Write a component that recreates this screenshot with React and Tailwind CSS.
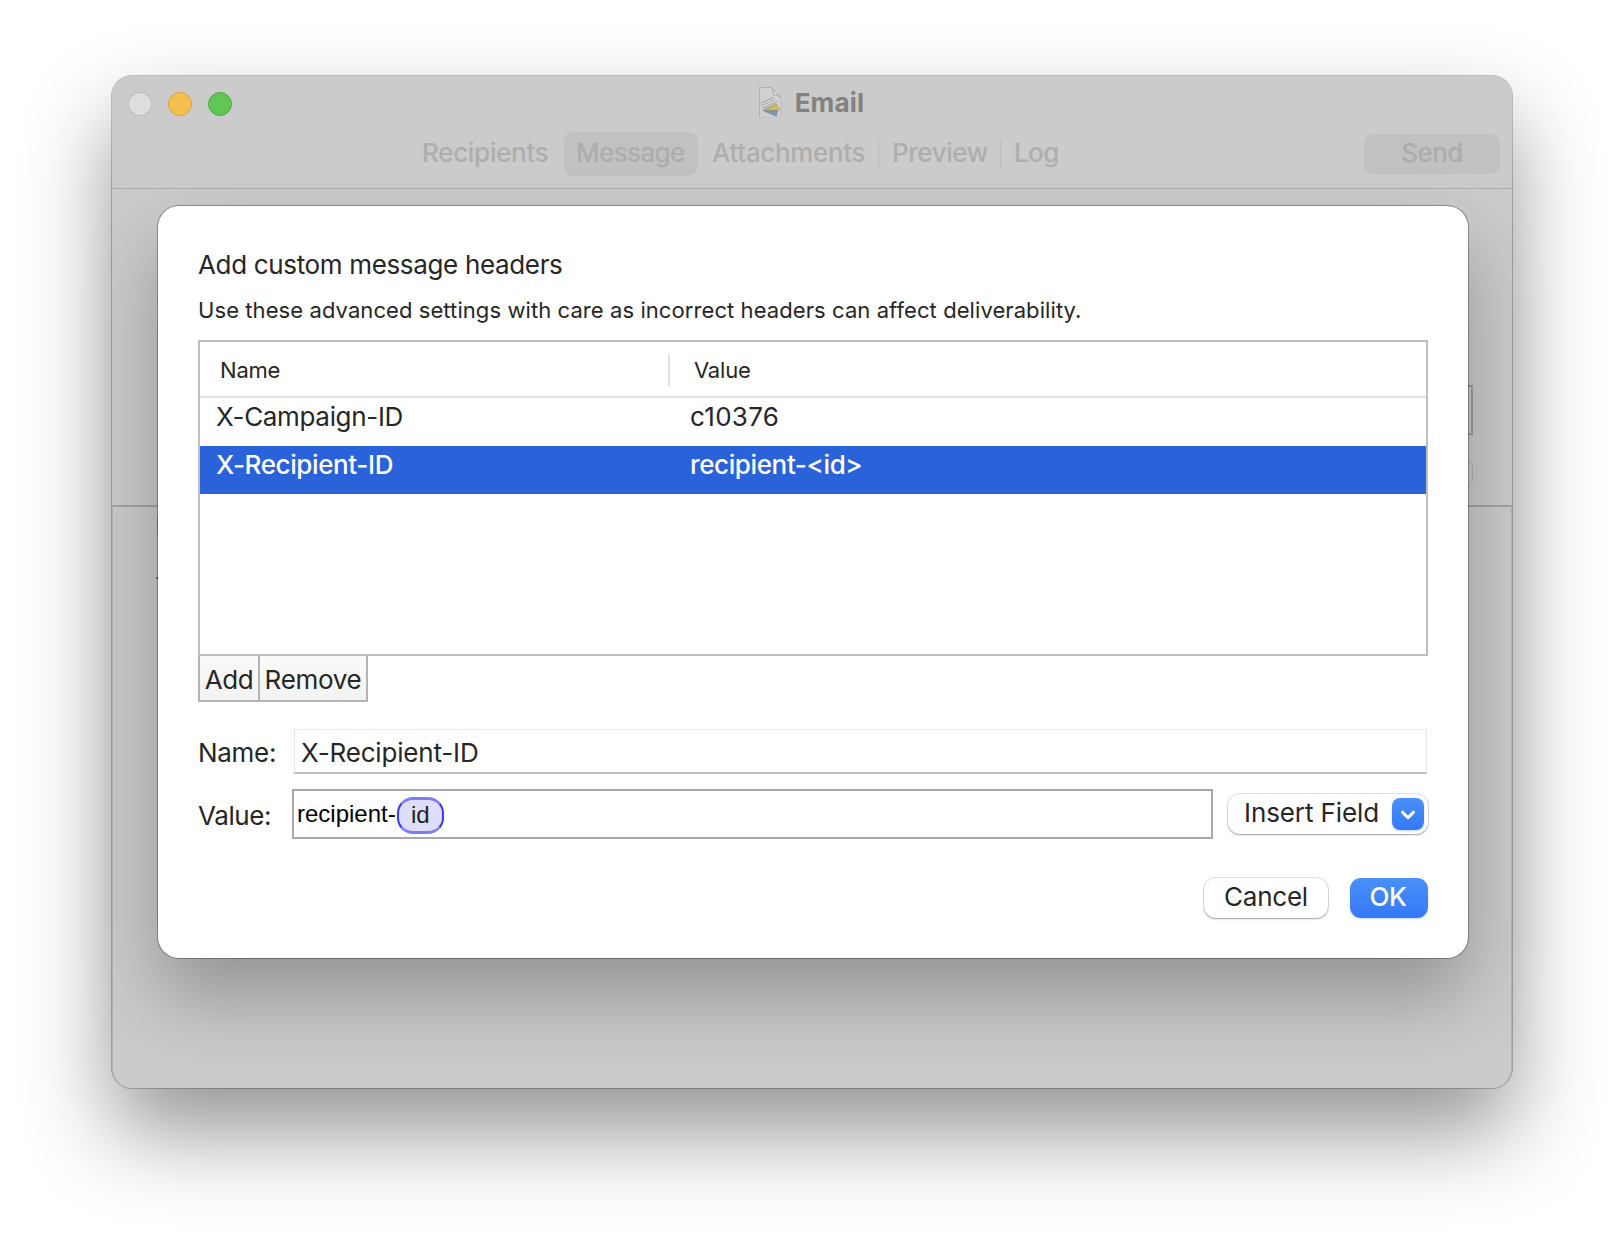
import React from "react";
import { ChevronDown } from "lucide-react";

const headers = [
  { name: "X-Campaign-ID", value: "c10376", nameClass: "tracking-[-0.33px]", valueClass: "tracking-[0.3px]" },
  { name: "X-Recipient-ID", value: "recipient-<id>", nameClass: "tracking-[-0.38px]", valueClass: "tracking-[-0.38px]", selected: true },
];

function DocumentIcon() {
  return (
    <svg className="w-[23px] h-[31px]" viewBox="0 0 23 31" fill="none">
      <path d="M0.5 0.5H12L22 11V30.5H0.5Z" fill="#d0d0d0" />
      <path d="M0.5 30.5V0.5H12" stroke="#b2b2b2" />
      <path d="M22 11V30.5" stroke="#bbbbbb" />
      <path d="M0.5 30.3H22" stroke="#c0c0c0" />
      <path d="M12 0.5L22 11C20 8.4 17 8 14.5 8.4C15 5 14.2 2 12 0.5Z" fill="#dcdcdc" stroke="#a5a5a5" strokeWidth="0.8" />
      <path d="M2 16L15 10.5M2 18.5L16 12.5M3 21L18 14.5M4 23L12 19.5" stroke="#a3a3a3" strokeWidth="1.1" />
      <path d="M2.5 17.3L15.5 11.8M3 19.8L17 13.6" stroke="#dedede" strokeWidth="0.9" />
      <path d="M4 23.5L18.5 23L17.5 29L12 27Z" fill="#8094ad" stroke="#74879f" strokeWidth="0.7" />
      <path d="M6 23L17 16.5L20.5 23Z" fill="#cfc56c" stroke="#a89f58" strokeWidth="0.8" />
      <path d="M10 21L13.5 20L16.5 18.5" stroke="#a39a54" strokeWidth="0.8" />
    </svg>
  );
}

function TitleBar() {
  return (
    <div className="grid grid-cols-3 items-center h-14">
      <div className="flex items-center gap-4 pl-4">
        <div className="size-6 rounded-full border border-[#bdbdbd] bg-[#dedede]"></div>
        <div className="size-6 rounded-full border border-[#dea03c] bg-[#f5bf4f]"></div>
        <div className="size-6 rounded-full border border-[#4fab43] bg-[#62c655]"></div>
      </div>
      <div className="flex items-center justify-center pb-[3px] pr-px">
        <DocumentIcon />
        <span className="ml-[13px] font-bold tracking-[0.2px] text-[#828282]">Email</span>
      </div>
    </div>
  );
}

function Toolbar() {
  return (
    <div className="flex items-center h-11 box-content pb-3 pl-[310px] pr-3 font-medium text-[#aeaeae] border-b border-[#adadad]">
      <span className="w-[142px] pb-[3px] tracking-[-0.3px]">Recipients</span>
      <span className="w-[134px] h-11 pt-px pl-3 rounded-[10px] leading-10 bg-[#c1c1c1] text-[#adadad] tracking-[-0.65px]">
        Message
      </span>
      <span className="w-[166px] ml-[14px] pb-[3px] tracking-[-0.35px]">Attachments</span>
      <span className="w-px h-7 bg-[#bcbcbc]"></span>
      <span className="w-[121px] pl-[13px] pb-[3px] tracking-[-0.45px]">Preview</span>
      <span className="w-px h-7 bg-[#bcbcbc]"></span>
      <span className="pl-[13px] pb-[3px] tracking-[-0.6px]">Log</span>
      <span className="flex items-center justify-center w-[136px] h-10 ml-auto pb-[3px] rounded-[10px] bg-[#c1c1c1] text-[#adadad] tracking-[-0.57px]">
        Send
      </span>
    </div>
  );
}

// Only the edges of these show around the sheet
function MessagePane() {
  return (
    <>
      <div className="flex flex-col items-end h-[316px] pt-[196px] pr-[39px]">
        <div className="w-[400px] h-[50px] border-2 border-[#9f9f9f]"></div>
        <div className="w-[200px] h-[29px] mt-[23px] rounded-[9px] border border-[#b3b3b3]"></div>
      </div>
      <div className="flex-1 rounded-b-[20px] border-x border-t-2 border-x-[#b4b4b4] border-t-[#a3a3a3]">
        <div className="w-[6px] h-[17px] mt-[10px] ml-[44px] bg-[#a0a0a0]"></div>
        <div className="w-[6px] h-[2px] mt-[43px] ml-[43px] bg-[#6a6a6a]"></div>
      </div>
    </>
  );
}

function HeaderTable() {
  return (
    <div className="h-[316px] mt-4 border-2 border-[#bebebe]">
      <div className="flex items-start h-14 border-b-2 border-[#e3e3e3] text-[22px] leading-[52px]">
        <div className="w-[468px] pt-[2px] pl-5 tracking-[-0.2px]">Name</div>
        <div className="w-[2px] h-8 mt-3 bg-[#e3e3e3]"></div>
        <div className="pt-[2px] pl-6 tracking-[-0.19px]">Value</div>
      </div>
      {headers.map((h) => (
        <div
          key={h.name}
          className={`flex items-center h-12 pb-[11px] pl-4 ${h.selected ? "bg-[#2962d9] text-white font-medium" : ""}`}
        >
          <span className={`w-[474px] ${h.nameClass}`}>{h.name}</span>
          <span className={h.valueClass}>{h.value}</span>
        </div>
      ))}
    </div>
  );
}

function HeadersSheet() {
  return (
    <div className="absolute left-[46px] top-[130px] w-[1310px] h-[752px] px-10 pt-[43px] rounded-[21px] bg-white text-[#262626] shadow-[0_0_0_1px_rgba(0,0,0,0.3),0_40px_76px_rgba(0,0,0,0.27)]">
      <h1 className="leading-8 tracking-[-0.34px]">Add custom message headers</h1>
      <p className="mt-[15px] text-[22px] leading-7 tracking-[0.08px]">
        Use these advanced settings with care as incorrect headers can affect deliverability.
      </p>

      <HeaderTable />

      <div className="flex h-[46px]">
        <button className="w-[62px] pt-[2px] border-2 border-t-0 border-[#b4b4b4] bg-gradient-to-b from-[#fafafa] to-[#f2f2f2] tracking-[-0.5px]">
          Add
        </button>
        <button className="w-[108px] pt-[2px] border-r-2 border-b-2 border-[#b4b4b4] bg-gradient-to-b from-[#fafafa] to-[#f2f2f2] tracking-[-0.3px]">
          Remove
        </button>
      </div>

      <div className="flex items-center h-[45px] mt-[27px]">
        <label className="w-24 pt-px tracking-[-0.3px]">Name:</label>
        <div className="flex-1 h-full mr-px pl-[6px] border border-b-2 border-[#e6e6e6] border-b-[#c2c2c2] leading-[45px] tracking-[-0.17px]">
          X-Recipient-ID
        </div>
      </div>

      <div className="flex items-center h-[50px] mt-[15px]">
        <label className="w-[94px] pt-[2px] tracking-[-0.41px]">Value:</label>
        <div className="flex items-center w-[921px] h-full pl-[3px] border-2 border-[#a8a8a8] font-['Liberation_Sans',Arial,sans-serif] text-2xl text-black">
          <span className="pb-px">recipient-</span>
          <span className="w-[47px] h-[37px] mt-[3px] ml-px rounded-[16px] border-x-2 border-y-3 border-x-[#3c3cf5] border-y-[#7d7dfb] bg-[#dedefb] text-center leading-[29px] text-[#222]">
            id
          </span>
        </div>
        <button className="flex items-center w-[200px] h-10 ml-auto pl-4 pr-1 rounded-xl bg-white shadow-[0_0_0_1px_rgba(0,0,0,0.1),0_1px_2px_rgba(0,0,0,0.3)]">
          <span className="pb-[3px] tracking-[-0.1px]">Insert Field</span>
          <span className="flex items-center justify-center size-8 ml-auto rounded-lg bg-gradient-to-b from-[#4a90f8] to-[#3478f6] text-white shadow-[0_1px_2px_rgba(52,120,246,0.3)]">
            <ChevronDown className="size-[22px] mt-px" strokeWidth={3.4} />
          </span>
        </button>
      </div>

      <div className="flex justify-end gap-[22px] mt-[39px]">
        <button className="w-[124px] h-10 pb-[3px] rounded-xl bg-white leading-8 tracking-[-0.25px] shadow-[0_0_0_1px_rgba(0,0,0,0.1),0_1px_2px_rgba(0,0,0,0.3)]">
          Cancel
        </button>
        <button className="w-[78px] h-10 pb-[3px] pr-[2px] rounded-[11px] bg-gradient-to-b from-[#4a90f8] to-[#3478f6] leading-8 font-medium text-white tracking-[-0.5px] shadow-[0_1px_2px_rgba(52,120,246,0.3)]">
          OK
        </button>
      </div>
    </div>
  );
}

function App() {
  return (
    <div className="w-[1624px] h-[1236px] pl-28 pt-[76px] overflow-hidden bg-white font-['Inter',sans-serif] text-[26px]">
      <div className="relative flex flex-col w-[1400px] h-[1012px] rounded-[20px] bg-[#cbcbcb] shadow-[0_0_0_1px_rgba(0,0,0,0.22),0_44px_88px_rgba(0,0,0,0.42)]">
        <TitleBar />
        <Toolbar />
        <MessagePane />
        <HeadersSheet />
      </div>
    </div>
  );
}

export default App;
